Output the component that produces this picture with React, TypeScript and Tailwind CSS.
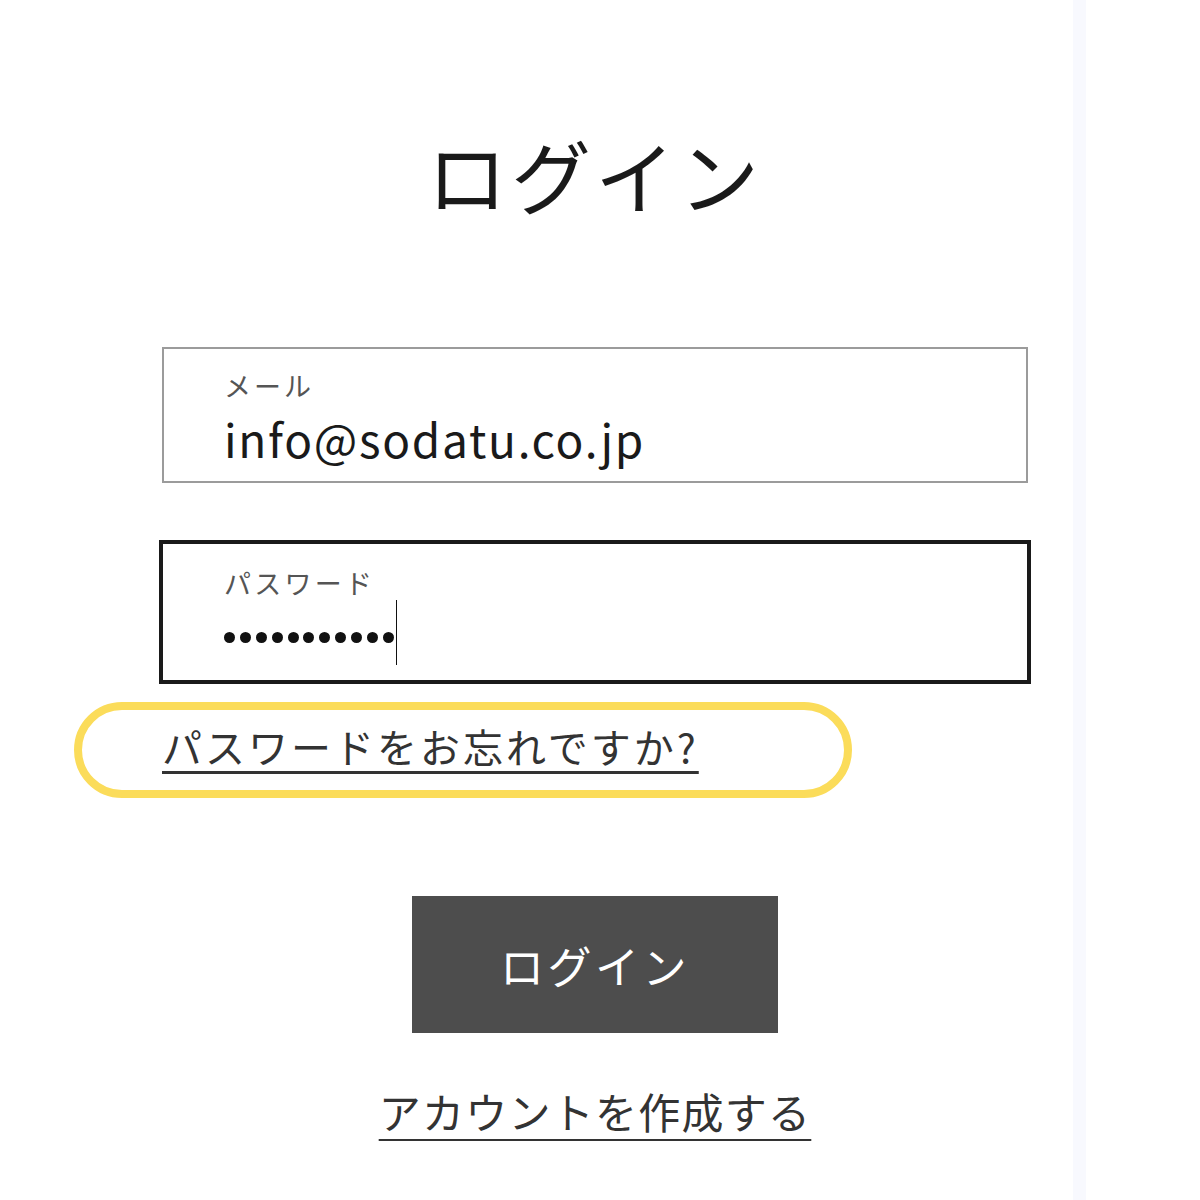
import React from "react";

const JP = { fontFamily: '"Noto Sans CJK JP", "Noto Sans", sans-serif' };

export default function App() {
  const dots = Array.from({ length: 11 });
  return (
    <div className="flex min-h-[1200px] w-[1200px] bg-white text-[#1a1a1a]" style={JP}>
      <main className="w-[1073px] shrink-0">
        <div className="ml-[162px] flex w-[866px] flex-col">
          <h1 className="mt-[133px] text-center text-[80px] font-normal leading-none tracking-[0.05em] text-[#1a1a1a]">
            ログイン
          </h1>

          <div className="mt-[134px] flex h-[136px] flex-col border-2 border-[#9b9b9b] pl-[60px] pt-[23px]">
            <span className="text-[27px] leading-none tracking-[0.11em] text-[#555]">メール</span>
            <span className="mt-[16px] text-[46px] leading-none tracking-[0.037em] text-[#1a1a1a]">info@sodatu.co.jp</span>
          </div>

          <div className="-mx-[3px] mt-[57px] flex h-[144px] flex-col border-4 border-[#1a1a1a] pl-[61px] pt-[25px]">
            <span className="text-[27px] leading-none tracking-[0.12em] text-[#555]">パスワード</span>
            <div className="mt-[3px] flex h-[66px] items-center">
              <div className="mt-[10px] flex items-center gap-[4.9px]">
                {dots.map((_, i) => (
                  <span key={i} className="block h-[11px] w-[11px] rounded-full bg-[#111]" />
                ))}
              </div>
              <span className="ml-[2px] block h-[65px] w-[1.5px] bg-[#111]" />
            </div>
          </div>

          <div className="relative mt-[38px] self-start">
            <div className="pointer-events-none absolute -left-[88px] -top-[20px] h-[96px] w-[778px] rounded-full border-[8px] border-[#fbdc5a]" />
            <a className="relative block text-[40px] leading-[48px] tracking-[0.075em] text-[#333] underline decoration-[3px] underline-offset-[8px]">
              パスワードをお忘れですか?
            </a>
          </div>

          <button className="mt-[126px] flex h-[137px] w-[366px] items-center justify-center self-center bg-[#4d4d4d] text-[44px] leading-none tracking-[0.08em] text-white">
            ログイン
          </button>

          <a className="mt-[52px] self-center text-[42px] leading-[52px] tracking-[0.03em] text-[#333] underline decoration-[2px] underline-offset-[10px]">
            アカウントを作成する
          </a>
        </div>
      </main>
      <div className="w-[13px] shrink-0 bg-[#f8f9fe]" />
      <div className="flex-1 bg-white" />
    </div>
  );
}
